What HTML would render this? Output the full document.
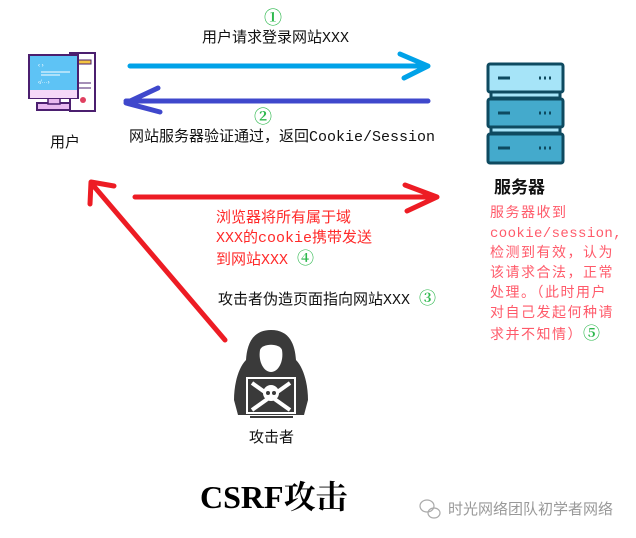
<!DOCTYPE html>
<html><head><meta charset="utf-8"><style>
body{margin:0;width:636px;height:538px;background:#fff;position:relative;overflow:hidden;font-family:"Liberation Sans","Noto Sans CJK SC",sans-serif;}
.t{position:absolute;white-space:nowrap;font-size:14px;color:#111;line-height:16px}
.m{font-family:"Liberation Mono","Noto Sans CJK SC",monospace;font-size:15px}
.g{color:#2db84d;font-family:"Liberation Serif","Noto Serif CJK SC",serif;font-weight:bold}
.r{color:#ff2a2a}
.p{position:absolute;left:490px;top:204px;color:#ff5a6a;font-size:14px;line-height:20px;letter-spacing:1.5px;font-family:"Liberation Mono","Noto Sans CJK SC",monospace;width:146px;white-space:nowrap}
</style></head><body>
<svg width="636" height="538" style="position:absolute;left:0;top:0">
<g stroke-linecap="round" stroke-linejoin="round" fill="none">
<path d="M130 66H428M400 54L428 66L404 78" stroke="#00a2e8" stroke-width="5"/>
<path d="M428 101H126M158 88L126 103L160 112" stroke="#3f48cc" stroke-width="5"/>
<path d="M135 197H437M405 185L437 197L407 211" stroke="#ed1c24" stroke-width="5"/>
<path d="M225 340L92 184M114 186L91 182L90 204" stroke="#ed1c24" stroke-width="5"/>
</g>
<rect x="70" y="53" width="25" height="58" fill="#fff" stroke="#4b1f6f" stroke-width="2"/>
<rect x="75" y="60" width="16" height="4" fill="#f4c542" stroke="#4b1f6f" stroke-width="1"/>
<path d="M78 83H91M78 88H91" stroke="#4b1f6f" stroke-width="1"/>
<circle cx="83" cy="100" r="3" fill="#e04060"/>
<rect x="37" y="103" width="33" height="7" fill="#e8b8f0" stroke="#4b1f6f" stroke-width="2"/>
<rect x="48" y="97" width="12" height="7" fill="#e8b8f0" stroke="#4b1f6f" stroke-width="1.5"/>
<rect x="29" y="55" width="49" height="43" fill="#5ec3f5" stroke="#4b1f6f" stroke-width="2"/>
<rect x="30" y="90" width="47" height="8" fill="#f5d8f8"/>
<path d="M41 72H70M41 75H60" stroke="#fff" stroke-width="1"/>
<text x="38" y="67" font-size="6" fill="#fff">‹ ›</text><text x="38" y="84" font-size="6" fill="#fff">‹/···›</text>
<g stroke="#0e4a60" stroke-width="3">
<rect x="488" y="64" width="75" height="28" rx="2" fill="#a6e4f8"/>
<rect x="491" y="92" width="69" height="6" fill="#a6e4f8"/>
<rect x="488" y="99" width="75" height="28" rx="2" fill="#44aacc"/>
<rect x="491" y="127" width="69" height="6" fill="#a6e4f8"/>
<rect x="488" y="134" width="75" height="29" rx="2" fill="#44aacc"/>
</g>
<g stroke="#0e4a60" stroke-width="3"><path d="M498 78H510M498 113H510M498 148H510M539 78h2M544 78h2M549 78h2M539 113h2M544 113h2M549 113h2M539 148h2M544 148h2M549 148h2"/></g>
<path d="M271 330C252 330 247 345 246 360C238 368 234 385 234 400L238 415H304L308 400C308 385 304 368 296 360C295 345 290 330 271 330Z" fill="#3a3a3a"/>
<path d="M260 350C262 343 280 343 282 350C284 362 278 372 271 372C264 372 258 362 260 350Z" fill="#fff"/>
<rect x="247" y="378" width="48" height="35" fill="#3a3a3a" stroke="#fff" stroke-width="2"/>
<path d="M252 383L290 410M290 383L252 410" stroke="#fff" stroke-width="4"/>
<circle cx="271" cy="393" r="8" fill="#fff"/>
<circle cx="268" cy="393" r="2" fill="#3a3a3a"/><circle cx="274" cy="393" r="2" fill="#3a3a3a"/>
<rect x="250" y="416" width="43" height="2" fill="#3a3a3a"/>
<g fill="none" stroke="#aaa" stroke-width="1.2"><ellipse cx="427" cy="506" rx="7" ry="6"/><ellipse cx="434" cy="513" rx="6" ry="5"/></g>
</svg>
<div class="t g" style="left:264px;top:10px;font-size:18px">①</div>
<div class="t m" style="left:202px;top:31px">用户请求登录网站XXX</div>
<div class="t g" style="left:254px;top:109px;font-size:18px">②</div>
<div class="t m" style="left:129px;top:130px">网站服务器验证通过，返回Cookie/Session</div>
<div class="t m" style="left:50px;top:136px">用户</div>
<div class="t" style="left:494px;top:179px;font-size:17px;line-height:18px;font-weight:bold">服务器</div>
<div class="t r m" style="left:216px;top:209px;line-height:20px">浏览器将所有属于域<br>XXX的cookie携带发送<br>到网站XXX <span class="g" style="font-size:17px">④</span></div>
<div class="t m" style="left:218px;top:291px">攻击者伪造页面指向网站XXX <span class="g" style="font-size:17px">③</span></div>
<div class="p">服务器收到<br><span style="letter-spacing:0.4px">cookie/session,</span><br>检测到有效，认为<br>该请求合法，正常<br>处理。（此时用户<br>对自己发起何种请<br>求并不知情）<span class="g" style="font-size:17px">⑤</span></div>
<div class="t m" style="left:249px;top:431px">攻击者</div>
<div class="t" style="left:200px;top:480px;font-size:32px;line-height:34px;font-weight:bold;font-family:'Liberation Serif','Noto Serif CJK SC',serif;color:#000">CSRF攻击</div>
<div class="t" style="left:448px;top:502px;color:#999;font-size:15px">时光网络团队初学者网络</div>
</body></html>
